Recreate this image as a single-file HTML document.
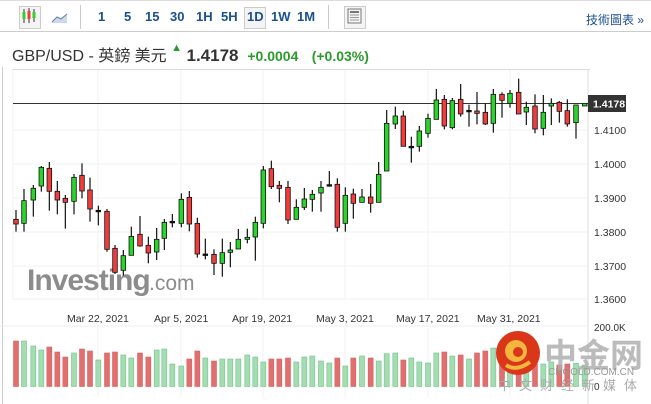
<!DOCTYPE html>
<html><head><meta charset="utf-8"><style>
body{margin:0;width:651px;height:404px;overflow:hidden;background:#fff;font-family:"Liberation Sans","Noto Sans CJK TC",sans-serif;position:relative}
.tb{position:absolute;left:0;top:0;width:651px;height:32px;border-bottom:1px solid #ccc;border-top:1px solid #ddd;box-sizing:border-box}
.t{position:absolute;top:8px;font-size:13px;font-weight:bold;color:#1a4f8f}
.title{position:absolute;left:12px;top:42px;font-size:16px;color:#333;white-space:nowrap}
svg{position:absolute;left:0;top:0}
</style></head><body>
<div class="tb">
<div style="position:absolute;left:19px;top:5px;width:20px;height:21px;border:1px solid #ccc;background:#f4f4f4"></div>
<div style="position:absolute;left:80px;top:4px;width:0;height:24px;border-left:1px solid #ccc"></div>
<div style="position:absolute;left:244px;top:6px;width:20px;height:20px;border:1px solid #ccc;background:#f4f4f4"></div>
<div style="position:absolute;left:328px;top:4px;width:0;height:24px;border-left:1px solid #ccc"></div>
<div style="position:absolute;left:344px;top:5px;width:20px;height:21px;border:1px solid #ccc;background:#f4f4f4"></div>
<span class="t" style="left:98px">1</span><span class="t" style="left:124px">5</span><span class="t" style="left:145px">15</span><span class="t" style="left:170px">30</span><span class="t" style="left:196px">1H</span><span class="t" style="left:221px">5H</span><span class="t" style="left:247px">1D</span><span class="t" style="left:271px">1W</span><span class="t" style="left:297px">1M</span>
<span class="t" style="left:586px;font-weight:normal;font-size:12px;top:10px">技術圖表 »</span>
</div>
<div class="title">GBP/USD - 英鎊 美元 <span style="color:#2a9a2a;font-size:11px;vertical-align:top">&#9650;</span> <b style="font-size:17px">1.4178</b>&nbsp; <b style="color:#2a9a2a;font-size:14px">+0.0004</b>&nbsp;&nbsp; <b style="color:#2a9a2a;font-size:14px">(+0.03%)</b></div>
<div style="position:absolute;left:12px;top:69px;width:578px;border-top:1px solid #ddd"></div>
<div style="position:absolute;left:2px;top:67px;height:337px;border-left:1px solid #ccc"></div>
<svg id="s" width="651" height="404"></svg>
<script>
var c=[[48,448,462,420,485,'r'],[72,392,460,357,485,'g'],[100,355,390,345,440,'g'],[124,292,348,288,365,'g'],[148,295,364,276,422,'r'],[172,364,390,333,433,'r'],[196,385,397,375,476,'r'],[222,322,394,312,433,'g'],[246,316,363,280,385,'r'],[270,360,417,323,455,'r'],[295,421,423,407,466,'d'],[321,424,538,417,545,'r'],[345,535,607,525,612,'r'],[370,557,601,540,617,'g'],[394,499,556,470,556,'g'],[420,493,528,438,530,'r'],[445,526,549,500,580,'r'],[470,508,546,474,570,'g'],[493,457,505,447,540,'g'],[517,454,456,432,472,'d'],[544,388,460,370,472,'g'],[568,382,462,363,484,'r'],[592,460,552,443,563,'r'],[616,552,554,506,568,'d'],[642,553,580,538,615,'r'],[667,548,580,506,620,'g'],[691,540,547,516,592,'g'],[715,508,537,477,537,'g'],[742,502,508,476,520,'g'],[766,457,501,440,572,'g'],[790,300,460,288,475,'g'],[814,296,350,272,357,'r'],[838,346,355,333,397,'r'],[864,352,450,333,462,'r'],[889,412,448,388,448,'g'],[913,387,412,354,420,'g'],[937,373,388,360,425,'g'],[963,352,369,333,425,'g']];
var c3=[[28,344,346,303,350,'d'],[52,343,472,325,485,'r'],[76,376,460,352,485,'g'],[100,372,400,356,446,'r'],[126,381,397,357,397,'g'],[152,381,400,342,428,'r'],[176,313,397,276,397,'g'],[200,160,303,120,303,'g'],[226,138,162,110,177,'g'],[250,138,229,122,229,'r'],[274,229,231,200,278,'d'],[298,183,229,168,245,'g'],[324,145,190,131,203,'g'],[349,90,148,57,148,'g'],[373,88,168,75,178,'r'],[397,92,173,84,178,'g'],[422,88,132,42,140,'r'],[447,121,123,104,170,'d'],[471,123,130,66,163,'r'],[496,127,162,100,165,'r'],[520,73,160,57,188,'g'],[546,73,91,67,143,'r'],[570,70,100,60,113,'g'],[596,67,132,26,132,'r'],[619,112,126,95,165,'g'],[645,108,177,73,190,'r'],[670,127,175,75,196,'g'],[694,100,108,85,165,'g'],[718,97,124,93,158,'r'],[742,122,162,88,170,'r'],[768,105,158,105,206,'g'],[794,100,108,100,108,'g']];
var vol=[93,93,108,120,111,126,141,129,117,123,150,129,126,135,144,129,141,120,117,162,168,147,123,144,153,147,147,147,135,141,156,147,147,144,156,141,138,153,159,144,168,144,138,144,153,131,129,150,144,156,159,129,126,138,135,147,129,123,114,120,130,140,150,162,162,156,165,162,160,165];
var h='';
[130,164,198,232,266,299].forEach(function(y){h+='<line x1="13" x2="588" y1="'+y+'" y2="'+y+'" stroke="#f2f2f2"/>'});
[98,181,263,345,428,510].forEach(function(x){h+='<line x1="'+x+'" x2="'+x+'" y1="70" y2="300" stroke="#f2f2f2"/><line x1="'+x+'" x2="'+x+'" y1="328" y2="397" stroke="#f2f2f2"/>'});
h+='<line x1="13" x2="13" y1="70" y2="300" stroke="#f0f0f0"/>';
h+='<line x1="588" x2="588" y1="69" y2="404" stroke="#ddd"/>';
h+='<line x1="0" x2="588" y1="326" y2="326" stroke="#eee"/>';
h+='<text x="27" y="290" font-family="Liberation Sans" font-weight="bold" font-size="30" fill="#8c8c8c" letter-spacing="-1">Investing</text><text x="149" y="290" font-family="Liberation Sans" font-size="21" fill="#8c8c8c">.com</text>';
var all=c.map(function(a){return [a[0]/3,70+a[1]/3,70+a[2]/3,70+a[3]/3,70+a[4]/3,a[5]]}).concat(c3.map(function(a){return [320+a[0]/3,70+a[1]/3,70+a[2]/3,70+a[3]/3,70+a[4]/3,a[5]]}));
h+='<line x1="13" x2="588" y1="103.5" y2="103.5" stroke="#333"/>';
all.forEach(function(a,i){var x=a[0];
h+='<line x1="'+x+'" x2="'+x+'" y1="'+a[3]+'" y2="'+a[4]+'" stroke="#111" stroke-width="1.2"/>';
var col=a[5]=='r'?'#f23b3b':a[5]=='g'?'#2bd42b':'#111';
var hh=Math.max(a[2]-a[1],1.5);
h+='<rect x="'+(x-2.3)+'" y="'+a[1]+'" width="4.6" height="'+hh+'" fill="'+col+'" stroke="#111" stroke-width="0.8"/>';
var vt=310+vol[i]/3, vc=a[5]=='r'?'#e07070':'#a6dcb3', vs=a[5]=='r'?'#d96060':'#6cc486';
h+='<rect x="'+(x-2.5)+'" y="'+vt+'" width="5" height="'+(386.5-vt)+'" fill="'+vc+'" stroke="'+vs+'" stroke-width="0.6"/>';
});
h+='<rect x="588" y="95" width="38" height="17" fill="#333"/><text x="593" y="107.5" font-size="10.5" font-family="Liberation Sans" font-weight="bold" fill="#fff">1.4178</text>';
[[1.4100,130],[1.4000,164],[1.3900,198],[1.3800,232],[1.3700,266],[1.3600,299]].forEach(function(p){h+='<text x="594" y="'+(p[1]+4)+'" font-size="10.5" font-family="Liberation Sans" fill="#333">'+p[0].toFixed(4)+'</text>'});
[['Mar 22, 2021',67],['Apr 5, 2021',154],['Apr 19, 2021',232],['May 3, 2021',316],['May 17, 2021',396],['May 31, 2021',477]].forEach(function(d){h+='<text x="'+d[1]+'" y="322" font-size="10.5" font-family="Liberation Sans" fill="#333">'+d[0]+'</text>'});
h+='<text x="594" y="331" font-size="10" font-family="Liberation Sans" fill="#333">200.0K</text>';
h+='<circle cx="518" cy="353" r="22" fill="#d9361a"/><circle cx="516" cy="351" r="11" fill="#f4b63c"/><circle cx="518" cy="352" r="5" fill="#d9361a"/><path d="M506 365 Q516 372 530 362" stroke="#f4b63c" stroke-width="4" fill="none"/>';
h+='<text x="544" y="367" font-size="33" font-weight="bold" fill="#b0b0b0" opacity="0.85" font-family="Noto Sans CJK SC,sans-serif">中金网</text>';
h+='<text x="548" y="375" font-size="10" fill="#999" font-family="Liberation Sans">CNGOLD.COM.CN</text>';
h+='<text x="498" y="390" font-size="13" fill="#aaa" letter-spacing="8" font-family="Noto Sans CJK SC,sans-serif">中文财经新媒体</text>';
h+='<text x="594" y="390" font-size="10" fill="#333" font-family="Liberation Sans">0</text>';
document.getElementById('s').innerHTML=h;
</script>
<svg width="651" height="32" style="pointer-events:none">
<g stroke="#333" stroke-width="1"><line x1="24" y1="9" x2="24" y2="23"/><line x1="29" y1="8" x2="29" y2="23"/><line x1="34" y1="9" x2="34" y2="22"/></g>
<rect x="22.5" y="12" width="3" height="7" fill="#2bd42b"/><rect x="27.5" y="11" width="3" height="8" fill="#f23b3b"/><rect x="32.5" y="12" width="3" height="6" fill="#2bd42b"/>
<path d="M52 22 L57 17 L61 19 L67 14 L67 23 L52 23Z" fill="#cfd9e6"/><path d="M52 22 L57 17 L61 19 L67 14" stroke="#5b7fb0" fill="none"/>
<rect x="348" y="9" width="13" height="14" fill="none" stroke="#777"/><line x1="350" y1="12" x2="359" y2="12" stroke="#777" stroke-width="2"/><line x1="350" y1="15" x2="359" y2="15" stroke="#999"/><line x1="350" y1="17.5" x2="359" y2="17.5" stroke="#999"/><line x1="350" y1="20" x2="359" y2="20" stroke="#999"/>
</svg>
</body></html>
